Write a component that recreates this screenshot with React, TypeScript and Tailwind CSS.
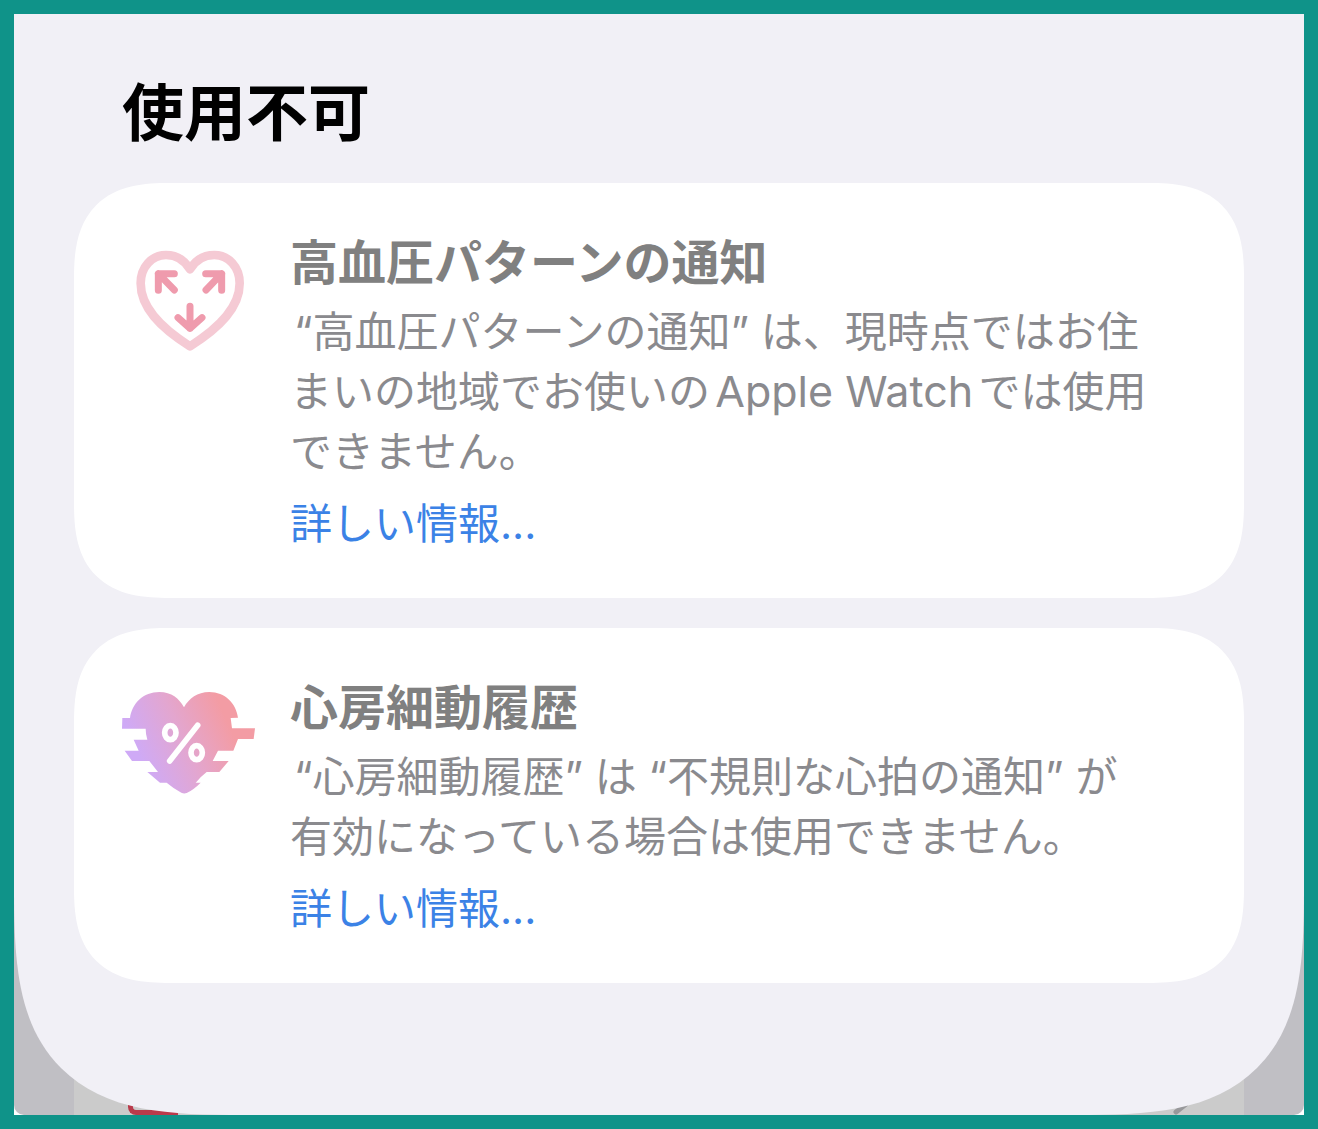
import type { ReactNode } from 'react';

function PressureHeartIcon() {
  return (
    <svg viewBox="36 51 402 312" className="h-[104px] w-[134px] shrink-0" fill="none" strokeLinecap="round" strokeLinejoin="round" aria-hidden="true">
      <path
        d="M240 118C222 88 196 75 168 75C125 75 92 112 92 160C92 232 150 292 240 349C330 292 389 232 389 160C389 112 356 75 313 75C285 75 258 88 240 118Z"
        stroke="#f5cad4"
        strokeWidth="26"
      />
      <g stroke="#ef9bad" strokeWidth="21">
        <path d="M193 131H145V181M145 131L193 180" />
        <path d="M287 131H335V181M335 131L288 180" />
        <path d="M240 229V295M204 263L240 295L276 263" />
      </g>
    </svg>
  );
}

function HistoryHeartIcon() {
  return (
    <svg viewBox="36 51 402 312" className="h-[104px] w-[134px] shrink-0" fill="none" aria-hidden="true">
      <defs>
        <linearGradient id="heartFill" gradientUnits="userSpaceOnUse" x1="90" y1="250" x2="350" y2="135">
          <stop offset="0" stopColor="#cfaaf6" />
          <stop offset="0.5" stopColor="#e3a6cf" />
          <stop offset="1" stopColor="#f39ca4" />
        </linearGradient>
      </defs>
      <path
        d="M60 129C66 85 100 51 148 51C185 51 207 70 222 97C237 70 262 51 298 51C345 51 378 85 384 128L362 129L366 160H435L431 192H384L370 227H324L308 258H356L328 291H290Q272 305 257 323H272Q250 345 230 354Q222 357 214 353Q190 340 170 323H150L112 291H144L118 258H66L44 227H86L71 194H112Q107 178 107 161H36L37 129Z"
        fill="url(#heartFill)"
      />
      <g stroke="#fff" strokeWidth="17">
        <ellipse cx="181" cy="173" rx="17" ry="21" />
        <ellipse cx="260" cy="233" rx="17" ry="21" />
        <path d="M263 151L179 258" strokeLinecap="round" />
      </g>
    </svg>
  );
}

function FeatureCard({ icon, title, children }: { icon: ReactNode; title: string; children: ReactNode }) {
  return (
    <section className="flex gap-[34px] rounded-[96px] bg-white pt-[50px] pr-12 pb-11 pl-12 [corner-shape:superellipse(1.4)]">
      <div className="shrink-0 pt-[14px]">{icon}</div>
      <div className="min-w-0 flex-1">
        <h2 className="text-[48px] leading-[60px] font-bold text-[#808080]">{title}</h2>
        <p className="mt-[9px] indent-1 text-[42px] leading-[60px] text-[#8a8a8e] [text-autospace:normal]">{children}</p>
        <a href="#details" className="mt-3 block w-fit text-[42px] leading-[60px] text-[#3b82e6]">
          詳しい情報...
        </a>
      </div>
    </section>
  );
}

export default function App() {
  return (
    <div lang="ja" className="flex min-h-screen flex-col border-[14px] border-[#0f9389] bg-white font-[Inter,'Noto_Sans_CJK_JP',sans-serif]">
      <div className="relative flex flex-1 flex-col overflow-hidden rounded-b-[10px] bg-[#c0bfc4]">
        <div className="absolute inset-x-[60px] bottom-0 h-24 rounded-t-[60px] bg-[#cbcbcb]" aria-hidden="true">
          <div className="absolute bottom-0 left-[54px] h-8 w-[50px] rounded-bl-[8px] border-b-[5px] border-l-[5px] border-[#b93a4b]" />
          <svg viewBox="0 0 16 12" className="absolute right-14 bottom-0 h-3 w-4" aria-hidden="true">
            <path d="M4 9L14 1" stroke="#98989b" strokeWidth="5" strokeLinecap="round" />
          </svg>
        </div>
        <main className="relative flex-1 rounded-b-[230px] bg-[#f1f0f6] px-[60px] pt-[60px] [corner-shape:superellipse(1.6)]">
          <h1 className="pl-12 text-[62px] leading-[80px] font-bold text-black">使用不可</h1>
          <div className="mt-[29px] flex flex-col gap-[30px]">
            <FeatureCard icon={<PressureHeartIcon />} title="高血圧パターンの通知">
              “高血圧パターンの通知” は、現時点ではお住
              <br />
              まいの地域でお使いの<span className="text-[43px] leading-none">Apple Watch</span>では使用
              <br />
              できません。
            </FeatureCard>
            <FeatureCard icon={<HistoryHeartIcon />} title="心房細動履歴">
              “心房細動履歴” は “不規則な心拍の通知” が
              <br />
              有効になっている場合は使用できません。
            </FeatureCard>
          </div>
        </main>
      </div>
    </div>
  );
}
